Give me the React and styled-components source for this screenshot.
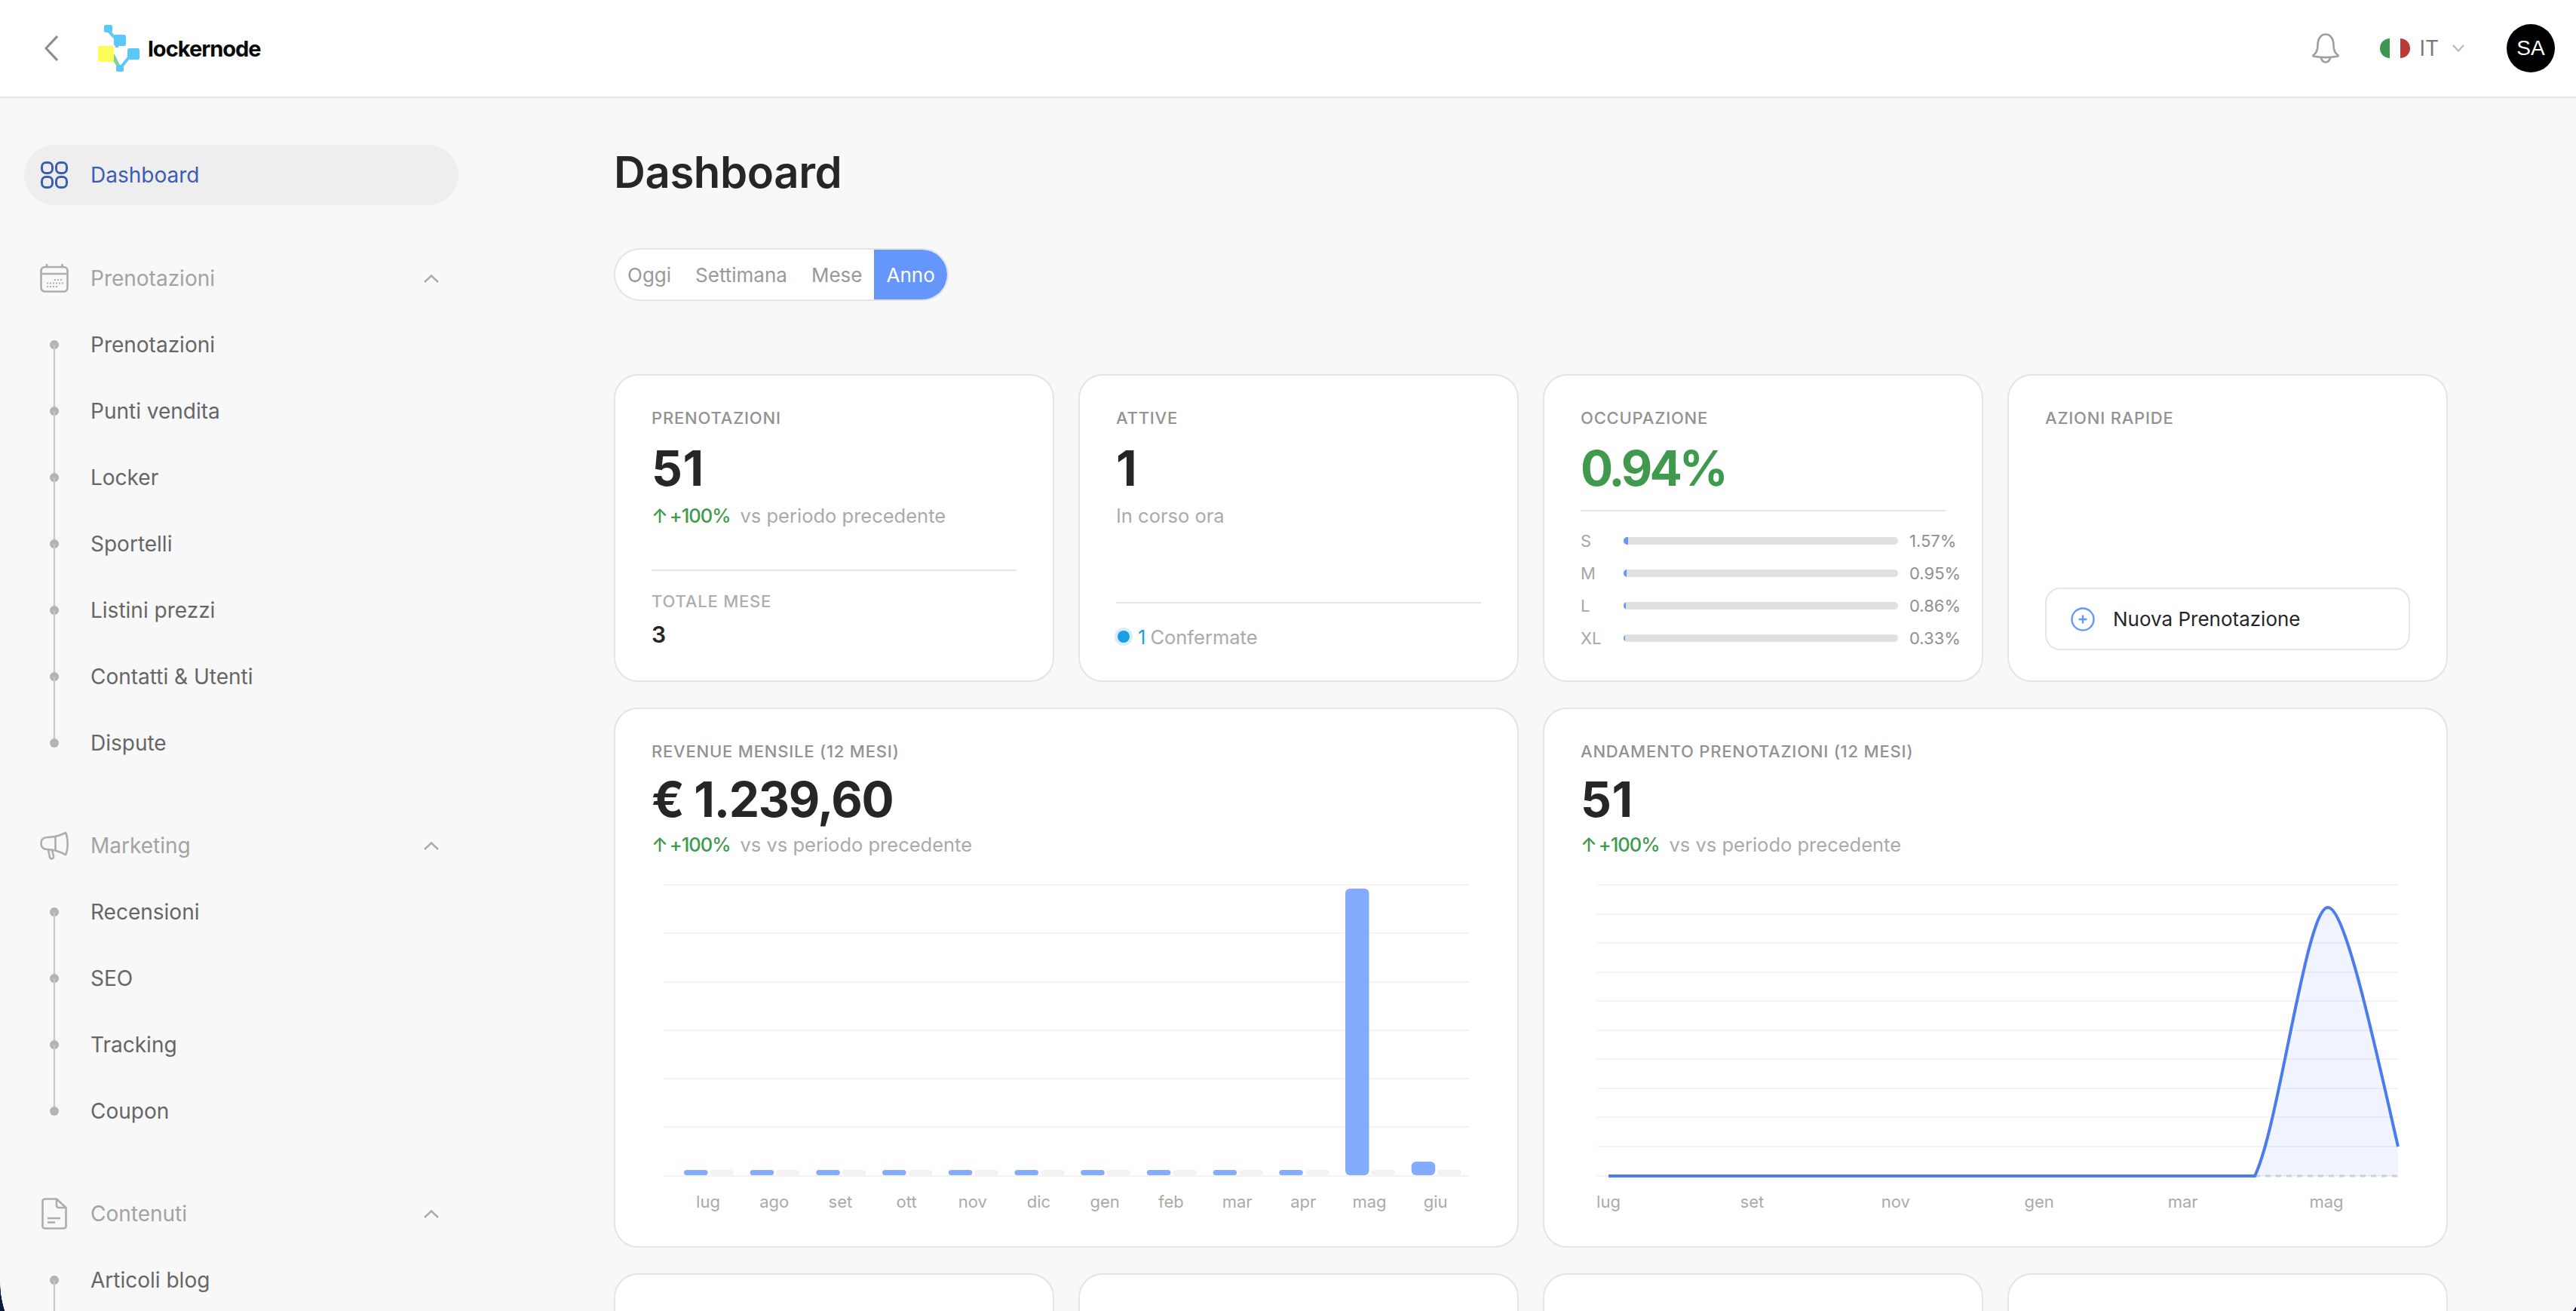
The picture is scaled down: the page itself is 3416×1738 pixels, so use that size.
import React from "react";
import styled, { createGlobalStyle } from "styled-components";

const GlobalStyle = createGlobalStyle`
  html, body { margin: 0; height: 100%; overflow: hidden; background: #f8f8f8; }
  body { font-family: Inter, "Liberation Sans", sans-serif; color: #262626; }
  #root { height: 100%; }
`;

const Page = styled.div`
  position: relative;
  height: 100vh;
  display: flex;
  flex-direction: column;
  overflow: hidden;

  /* the window's rounded corners, with the dark desktop behind them */
  &::before {
    content: "";
    position: absolute;
    left: 0;
    bottom: 0;
    width: 10px;
    height: 38px;
    background: radial-gradient(circle 123px at 123px 0, transparent 122.5px, #0d1b3e 123px);
  }

  &::after {
    content: "";
    position: absolute;
    right: 0;
    bottom: 0;
    width: 4px;
    height: 6px;
    background: linear-gradient(to bottom right, transparent 50%, #0d1b3e 50%);
  }
`;

const Header = styled.header`
  flex: none;
  height: 130px;
  box-sizing: border-box;
  background: #fff;
  border-bottom: 2px solid #e6e6e6;
  display: flex;
  align-items: center;
  padding: 0 28px 0 59px;
`;

const Back = styled.svg`
  width: 18px;
  height: 34px;
  margin-right: 53px;
`;

const Brand = styled.div`
  display: flex;
  align-items: center;
  gap: 11px;
  font-size: 29px;
  font-weight: 700;
  letter-spacing: -1px;
  color: #0a0a0a;
`;

const HeaderRight = styled.div`
  margin-left: auto;
  display: flex;
  align-items: center;
`;

const FlagSlot = styled.span`
  display: flex;
  margin-left: 54px;
`;

const LangText = styled.span`
  font-size: 28px;
  color: #777;
  margin: 0 18px 0 12px;
`;

const Avatar = styled.div`
  width: 64px;
  height: 64px;
  border-radius: 50%;
  background: #000;
  color: #fff;
  font-size: 28px;
  font-family: "Liberation Sans", sans-serif;
  display: flex;
  align-items: center;
  justify-content: center;
  margin-left: 56px;
`;

const Body = styled.div`
  flex: 1;
  min-height: 0;
  display: flex;
`;

const Sidebar = styled.nav`
  flex: none;
  width: 640px;
  box-sizing: border-box;
  padding: 62px 32px 0;
`;

const ActiveLink = styled.div`
  width: 576px;
  height: 80px;
  border-radius: 40px;
  background: #eeeeee;
  display: flex;
  align-items: center;
  gap: 30px;
  padding-left: 22px;
  box-sizing: border-box;
  font-size: 28px;
  color: #3b5db4;
`;

const Group = styled.section`
  margin-top: ${p => (p.$first ? 73 : 68)}px;
`;

const GroupHead = styled.div`
  height: 48px;
  display: grid;
  grid-template-columns: 38px 1fr 20px;
  column-gap: 29px;
  align-items: center;
  padding: 0 26px 0 21px;
  font-size: 28px;
  color: #a3a3a3;
`;

const IconSlot = styled.span`
  display: flex;
  justify-content: center;
  align-items: center;
`;

const Items = styled.ul`
  list-style: none;
  margin: 20px 0 0;
  padding: 0;
`;

const Item = styled.li`
  position: relative;
  height: 88px;
  display: flex;
  align-items: center;
  padding-left: 88px;
  font-size: 28px;
  color: #666;

  &::before {
    content: "";
    position: absolute;
    left: 34px;
    top: 38px;
    width: 12px;
    height: 12px;
    border-radius: 50%;
    background: #b4b4b4;
  }

  &::after {
    content: "";
    display: ${p => (p.$last ? "none" : "block")};
    position: absolute;
    left: 39px;
    top: 44px;
    width: 2px;
    height: 88px;
    background: #c8c8c8;
  }
`;

const Main = styled.main`
  flex: 1;
  min-width: 0;
  padding: 62px 170px 0 174px;
`;

const Title = styled.h1`
  margin: 0;
  font-size: 58px;
  line-height: 72px;
  font-weight: 600;
  letter-spacing: -0.4px;
  color: #262626;
`;

const Segments = styled.div`
  display: inline-flex;
  margin-top: 65px;
  height: 70px;
  box-sizing: border-box;
  border: 2px solid #e5e5e5;
  border-radius: 35px;
  background: #fff;
  overflow: hidden;
`;

const Segment = styled.div`
  display: flex;
  align-items: center;
  padding: 0 16px;
  font-size: 26px;
  color: ${p => (p.$active ? "#fff" : "#999")};
  background: ${p => (p.$active ? "#6596fb" : "transparent")};
`;

const Row = styled.div`
  display: grid;
  grid-template-columns: repeat(${p => p.$cols}, 1fr);
  gap: 32px;
  margin-top: ${p => p.$top}px;
  height: ${p => p.$height}px;
`;

const Card = styled.div`
  box-sizing: border-box;
  background: #fff;
  border: 2px solid #e4e4e4;
  border-radius: 32px;
  padding: 42px 48px 40px;
  display: flex;
  flex-direction: column;
  min-width: 0;
`;

const Label = styled.div`
  font-size: 22px;
  line-height: 28px;
  font-weight: 500;
  letter-spacing: 0.8px;
  text-transform: uppercase;
  color: ${p => (p.$soft ? "#aeaeae" : "#929292")};
  margin-top: ${p => p.$top || 0}px;
`;

const Value = styled.div`
  font-size: 64px;
  line-height: 72px;
  font-weight: 700;
  letter-spacing: ${p => p.$spacing ?? 0.5}px;
  color: ${p => (p.$green ? "#3f9a4d" : "#262626")};
  margin-top: ${p => p.$top || 17}px;
`;

const Delta = styled.div`
  display: flex;
  align-items: center;
  height: 36px;
  margin-top: ${p => p.$top || 8}px;
  font-size: 25.5px;
  color: #aaa;
`;

const Up = styled.span`
  color: #3f9a4d;
  font-weight: 500;
  letter-spacing: -1px;
  word-spacing: -3px;
  margin-right: 13px;
`;

const Rule = styled.div`
  height: 2px;
  background: #e5e5e5;
  margin-top: ${p => p.$top}px;
`;

const Small = styled.div`
  font-size: 30px;
  line-height: 40px;
  font-weight: 600;
  margin-top: 10px;
`;

const StatusLine = styled.div`
  display: flex;
  align-items: center;
  margin-top: 26px;
  height: 36px;
  font-size: 25.5px;
  color: #aaa;
`;

const StatusDot = styled.span`
  width: 16px;
  height: 16px;
  border-radius: 50%;
  background: #1b9fe2;
  box-shadow: 0 0 0 4px #d9eefa;
  margin: 0 11px 0 2px;
`;

const StatusCount = styled.span`
  color: #1b9fe2;
  margin-right: 6px;
`;

const Sizes = styled.div`
  display: flex;
  flex-direction: column;
  gap: 15px;
  margin-top: 25px;
`;

const SizeRow = styled.div`
  display: grid;
  grid-template-columns: 57px 364px 100px;
  align-items: center;
  height: 28px;
  font-size: 22px;
  color: #a6a6a6;
`;

const SizeTrack = styled.div`
  height: 10px;
  border-radius: 5px;
  background: #e0e0e0;
  overflow: hidden;
`;

const SizeFill = styled.div`
  height: 100%;
  background: #6596fb;
`;

const SizeValue = styled.span`
  padding-left: 15px;
  white-space: nowrap;
  color: #8f8f8f;
`;

const QuickButton = styled.div`
  margin-top: auto;
  height: 83px;
  box-sizing: border-box;
  border: 2px solid #e5e5e5;
  border-radius: 20px;
  display: flex;
  align-items: center;
  gap: 24px;
  padding-left: 32px;
  font-size: 26px;
  color: #262626;
`;

const Chart = styled.svg`
  display: block;
  margin-top: 23px;
  width: 1100px;
  height: 450px;
  overflow: visible;
`;

const AxisText = styled.text`
  font-family: Inter, "Liberation Sans", sans-serif;
  font-size: 22px;
  fill: #aaa;
  text-anchor: middle;
`;

const navGroups = [
  { label: "Prenotazioni", icon: "calendar", items: ["Prenotazioni", "Punti vendita", "Locker", "Sportelli", "Listini prezzi", "Contatti & Utenti", "Dispute"], close: true },
  { label: "Marketing", icon: "megaphone", items: ["Recensioni", "SEO", "Tracking", "Coupon"], close: true },
  { label: "Contenuti", icon: "doc", items: ["Articoli blog"] },
];

const sizes = [
  { name: "S", pct: "1.57%", w: 1.6 },
  { name: "M", pct: "0.95%", w: 1 },
  { name: "L", pct: "0.86%", w: 0.9 },
  { name: "XL", pct: "0.33%", w: 0.6 },
];

const revenue = [
  ["lug", 7], ["ago", 7], ["set", 7], ["ott", 7], ["nov", 7], ["dic", 7],
  ["gen", 7], ["feb", 7], ["mar", 7], ["apr", 7], ["mag", 380], ["giu", 18],
];

const Logo = () => (
  <svg width="55" height="62" viewBox="0 0 55 62" fill="none">
    <path d="M11 5 L25 20 L25 30" stroke="#5ac8fb" strokeWidth="4" />
    <path d="M20 40 L29 58 L45 38" stroke="#5ac8fb" strokeWidth="4" />
    <path d="M20 44 L27 54" stroke="#8fd07a" strokeWidth="4" />
    <rect x="8" y="0" width="11" height="10" rx="2.5" fill="#5ac8fb" />
    <rect x="21" y="13" width="16" height="15" rx="2.5" fill="#5ac8fb" />
    <rect x="0" y="28" width="21" height="21" rx="2.5" fill="#fdfd55" />
    <rect x="39" y="31" width="16" height="15" rx="2.5" fill="#5ac8fb" />
    <rect x="24" y="53" width="10" height="9" rx="2.5" fill="#5ac8fb" />
  </svg>
);

const GridIcon = () => (
  <svg width="36" height="36" viewBox="0 0 36 36" fill="none" stroke="#3b5db4" strokeWidth="3">
    <rect x="1.5" y="1.5" width="14" height="14" rx="5.5" />
    <rect x="20.5" y="1.5" width="14" height="14" rx="5.5" />
    <rect x="1.5" y="20.5" width="14" height="14" rx="5.5" />
    <rect x="20.5" y="20.5" width="14" height="14" rx="5.5" />
  </svg>
);

const dots = [
  [19, 20], [23, 20], [27, 20],
  [9, 24.5], [13, 24.5], [17, 24.5], [21, 24.5], [25, 24.5], [29, 24.5],
  [9, 29], [13, 29], [17, 29], [21, 29],
];

const NavIcon = ({ name }) => {
  if (name === "calendar") {
    return (
      <svg width="38" height="38" viewBox="0 0 38 38" fill="none" stroke="#adadad" strokeWidth="2.6">
        <rect x="1.5" y="4" width="35" height="32.5" rx="5" />
        <path d="M1.5 13H36.5M9 0V4M29.5 0V4" />
        {dots.map(([x, y]) => <rect key={x + "-" + y} x={x} y={y} width="2" height="2" fill="#adadad" stroke="none" />)}
      </svg>
    );
  }
  if (name === "megaphone") {
    return (
      <svg width="38" height="38" viewBox="0 0 38 38" fill="none" stroke="#adadad" strokeWidth="2.6" strokeLinejoin="round">
        <path d="M34 2C26 6 18 8 10 8C4 8 1.5 11 1.5 16C1.5 21 4 24 10 24C18 24 26 27 34 31C37.5 25 37.5 8 34 2Z" />
        <path d="M20.5 7.5V26M11 24L13 34.5C14 37.5 19 36.5 18 33L16 24.5" />
      </svg>
    );
  }
  return (
    <svg width="34" height="42" viewBox="0 0 34 42" fill="none" stroke="#adadad" strokeWidth="2.6" strokeLinejoin="round">
      <path d="M4.5 1.5H20L32.5 13V37.5A3 3 0 0 1 29.5 40.5H4.5A3 3 0 0 1 1.5 37.5V4.5A3 3 0 0 1 4.5 1.5Z" />
      <path d="M20 1.5V10A3 3 0 0 0 23 13H32.5M8 27H25M8 32.5H18" />
    </svg>
  );
};

const ChevronUp = () => (
  <svg width="20" height="11" viewBox="0 0 20 11" fill="none" stroke="#adadad" strokeWidth="2.6">
    <path d="M1 10L10 1.5L19 10" />
  </svg>
);

const Bell = () => (
  <svg width="36" height="40" viewBox="0 0 36 40" fill="none" stroke="#9e9e9e" strokeWidth="2.6" strokeLinejoin="round">
    <path d="M7.5 16C7.5 7 12 1.5 18 1.5C24 1.5 28.5 7 28.5 16C28.5 22 29.5 26 34.5 29.5C35 30 34.5 30.5 33 30.8C24 32.4 12 32.4 3 30.8C1.5 30.5 1 30 1.5 29.5C6.5 26 7.5 22 7.5 16Z" />
    <path d="M12 32C12 36 15 38.5 18 38.5C21 38.5 24 36 24 32" />
  </svg>
);

const Flag = () => (
  <svg width="40" height="26" viewBox="0 0 40 26">
    <path d="M13 0A13 13 0 0 0 13 26Z" fill="#3f9652" />
    <path d="M27 0A13 13 0 0 1 27 26Z" fill="#bd3a3a" />
  </svg>
);

const PlusCircle = () => (
  <svg width="32" height="32" viewBox="0 0 32 32" fill="none" stroke="#6596fb" strokeWidth="2.4">
    <circle cx="16" cy="16" r="14.5" />
    <path d="M16 10.5V21.5M10.5 16H21.5" />
  </svg>
);

const BarChart = () => (
  <Chart viewBox="864 1160 1100 450">
    {[1173, 1237, 1302, 1366, 1430, 1494, 1559].map(y => (
      <line key={y} x1="880" x2="1948" y1={y} y2={y} stroke="#f3f3f3" strokeWidth="2" />
    ))}
    {revenue.map(([month, h], i) => {
      const x = 907 + i * 87.7;
      return (
        <g key={month}>
          <rect x={x} y={1558 - h} width="31.5" height={h} rx={h > 8 ? 6 : 3.5} fill="#6596fb" opacity="0.8" />
          <rect x={x + 34.5} y="1551" width="31.5" height="7" rx="3.5" fill="#f2f2f2" />
          <AxisText x={x + 32} y="1601">{month}</AxisText>
        </g>
      );
    })}
  </Chart>
);

const lineGrid = [1173, 1212, 1250, 1289, 1327, 1366, 1404, 1443, 1481, 1520, 1559];
const lineLabels = ["lug", "set", "nov", "gen", "mar", "mag"];
const CURVE = "C3022 1495 3058 1203 3087 1203C3110 1203 3148 1380 3180 1520";

const LineChart = () => (
  <Chart viewBox="2096 1160 1100 450">
    {lineGrid.map(y => (
      <line key={y} x1="2118" x2="3180" y1={y} y2={y} stroke="#f3f3f3" strokeWidth="2" />
    ))}
    <path d={`M2990 1559${CURVE}V1559Z`} fill="#6596fb" opacity="0.1" />
    <line x1="2990" x2="3180" y1="1559" y2="1559" stroke="#cfcfcf" strokeWidth="3" strokeDasharray="7 7" />
    <path d={`M2133 1559H2990${CURVE}`} fill="none" stroke="#4a7bef" strokeWidth="4" />
    {lineLabels.map((month, i) => (
      <AxisText key={month} x={2133 + i * 190.4} y="1601">{month}</AxisText>
    ))}
  </Chart>
);

const App = () => (
  <Page>
    <GlobalStyle />
    <Header>
      <Back viewBox="0 0 18 34" fill="none" stroke="#8a8a8a" strokeWidth="3">
        <path d="M17 1L2 17L17 33" />
      </Back>
      <Brand>
        <Logo />
        lockernode
      </Brand>
      <HeaderRight>
        <Bell />
        <FlagSlot><Flag /></FlagSlot>
        <LangText>IT</LangText>
        <svg width="16" height="10" viewBox="0 0 16 10" fill="none" stroke="#bbb" strokeWidth="2.4">
          <path d="M1 1L8 8.5L15 1" />
        </svg>
        <Avatar>SA</Avatar>
      </HeaderRight>
    </Header>
    <Body>
      <Sidebar>
        <ActiveLink>
          <GridIcon />
          Dashboard
        </ActiveLink>
        {navGroups.map((g, i) => (
          <Group key={g.label} $first={i === 0}>
            <GroupHead>
              <IconSlot><NavIcon name={g.icon} /></IconSlot>
              {g.label}
              <ChevronUp />
            </GroupHead>
            <Items>
              {g.items.map((it, j) => (
                <Item key={it} $last={g.close && j === g.items.length - 1}>{it}</Item>
              ))}
            </Items>
          </Group>
        ))}
      </Sidebar>
      <Main>
        <Title>Dashboard</Title>
        <Segments>
          <Segment>Oggi</Segment>
          <Segment>Settimana</Segment>
          <Segment>Mese</Segment>
          <Segment $active>Anno</Segment>
        </Segments>
        <Row $cols={4} $top={97} $height={408}>
          <Card>
            <Label>Prenotazioni</Label>
            <Value>51</Value>
            <Delta><Up>↑ +100%</Up>vs periodo precedente</Delta>
            <Rule $top={54} />
            <Label $soft $top={26}>Totale mese</Label>
            <Small>3</Small>
          </Card>
          <Card>
            <Label>Attive</Label>
            <Value>1</Value>
            <Delta>In corso ora</Delta>
            <Rule $top={97} />
            <StatusLine>
              <StatusDot />
              <StatusCount>1</StatusCount>
              Confermate
            </StatusLine>
          </Card>
          <Card>
            <Label>Occupazione</Label>
            <Value $green $spacing={-4}>0.94%</Value>
            <Rule $top={19} />
            <Sizes>
              {sizes.map(s => (
                <SizeRow key={s.name}>
                  {s.name}
                  <SizeTrack><SizeFill style={{ width: `${s.w}%` }} /></SizeTrack>
                  <SizeValue>{s.pct}</SizeValue>
                </SizeRow>
              ))}
            </Sizes>
          </Card>
          <Card>
            <Label>Azioni rapide</Label>
            <QuickButton>
              <PlusCircle />
              Nuova Prenotazione
            </QuickButton>
          </Card>
        </Row>
        <Row $cols={2} $top={34} $height={716}>
          <Card>
            <Label>Revenue mensile (12 mesi)</Label>
            <Value $top={14} $spacing={-1.3}>€ 1.239,60</Value>
            <Delta $top={5}><Up>↑ +100%</Up>vs vs periodo precedente</Delta>
            <BarChart />
          </Card>
          <Card>
            <Label>Andamento prenotazioni (12 mesi)</Label>
            <Value $top={14}>51</Value>
            <Delta $top={5}><Up>↑ +100%</Up>vs vs periodo precedente</Delta>
            <LineChart />
          </Card>
        </Row>
        <Row $cols={4} $top={34} $height={300}>
          <Card />
          <Card />
          <Card />
          <Card />
        </Row>
      </Main>
    </Body>
  </Page>
);

export default App;
